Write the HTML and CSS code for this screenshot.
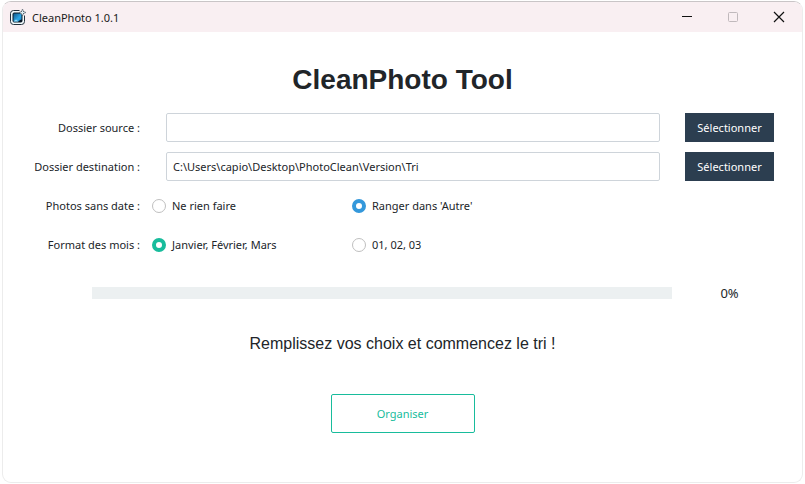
FILE: index.html
```html
<!DOCTYPE html>
<html lang="fr">
<head>
  <meta charset="UTF-8" />
  <meta name="viewport" content="width=device-width, initial-scale=1.0"/>
  <title>CleanPhoto 1.0.1</title>
  <link rel="stylesheet" href="styles.css">
</head>
<body>

  <div class="window">
    <!-- Title bar -->
    <header class="titlebar">
      <svg class="app-icon" width="17" height="17" viewBox="0 0 17 17" aria-hidden="true">
        <defs>
          <linearGradient id="screen" x1="0" y1="0" x2="1" y2="1">
            <stop offset="0" stop-color="#0f4f80"/>
            <stop offset=".6" stop-color="#2ba6e6"/>
            <stop offset="1" stop-color="#1a78b8"/>
          </linearGradient>
        </defs>
        <rect x="1.500" y="1.500" width="14" height="14" rx="3" fill="#f2fafc" stroke="#22303c"/>
        <rect x="4" y="4" width="9" height="9" rx="1" fill="url(#screen)" stroke="#0b1a28"/>
        <path d="M9 13l2-2 2-.5V13z" fill="#061524"/>
        <path d="M4.500 12.500l2.500-2 2.500 2z" fill="#9adcf5"/>
        <path d="M10.500 0h6.500v6.500h-3l-3.500-3z" fill="#f9eff2"/>
        <path d="M13.500 0l1 2.500L17 3.500l-2.500 1-1 2.500-1-2.500-2.500-1 2.500-1z" fill="#dff0f6" stroke="#32404c" stroke-width=".5"/>
        <path d="M12 2l.6.6M15 2l-.6.6M15 5l-.6-.6" stroke="#32404c"/>
      </svg>
      <span class="app-name">CleanPhoto 1.0.1</span>
      <div class="window-controls">
        <button type="button" aria-label="Réduire">
          <svg width="12" height="12" viewBox="0 0 12 12"><path d="M1 5.500h10" stroke="#111"/></svg>
        </button>
        <button type="button" aria-label="Agrandir" disabled>
          <svg width="12" height="12" viewBox="0 0 12 12"><rect x="1.500" y="1.500" width="9" height="9" rx="1" fill="none" stroke="#c0b9bc"/></svg>
        </button>
        <button type="button" aria-label="Fermer">
          <svg width="12" height="12" viewBox="0 0 12 12"><path d="M1 1l10 10M11 1L1 11" stroke="#111" stroke-width="1.200"/></svg>
        </button>
      </div>
    </header>

    <main>
      <h1>CleanPhoto Tool</h1>

      <form>
        <!-- Folders and options -->
        <div class="settings">
          <label for="source">Dossier source :</label>
          <input type="text" id="source" name="source">
          <button type="button" class="browse">Sélectionner</button>

          <label for="destination">Dossier destination :</label>
          <input type="text" id="destination" name="destination" value="C:\Users\capio\Desktop\PhotoClean\Version\Tri">
          <button type="button" class="browse">Sélectionner</button>

          <span id="nodate-label">Photos sans date :</span>
          <div class="options info" role="radiogroup" aria-labelledby="nodate-label">
            <label><input type="radio" name="nodate" value="none">Ne rien faire</label>
            <label><input type="radio" name="nodate" value="other" checked>Ranger dans 'Autre'</label>
          </div>

          <span id="month-label">Format des mois :</span>
          <div class="options" role="radiogroup" aria-labelledby="month-label">
            <label><input type="radio" name="month" value="name" checked>Janvier, Février, Mars</label>
            <label><input type="radio" name="month" value="number">01, 02, 03</label>
          </div>
        </div>

        <!-- Progress -->
        <div class="progress-row">
          <progress id="progress" value="0" max="100" aria-label="Progression"></progress>
          <output for="progress">0%</output>
        </div>

        <p class="status">Remplissez vos choix et commencez le tri !</p>

        <button type="submit" class="organize">Organiser</button>
      </form>
    </main>
  </div>

</body>
</html>
```

FILE: styles.css
```css
* {
  box-sizing: border-box;
}

body {
  margin: 0;
  padding: 1px 2px;
  font-family: "Noto Sans", "Open Sans", sans-serif;
  font-size: 11px;
  color: #212529;
  background: #fff;
}

.window {
  min-height: calc(100vh - 2px);
  border: 1px solid #ececec;
  border-top-color: #c9c5c7;
  border-radius: 9px;
  overflow: hidden;
  background: #fff;
}

.titlebar {
  display: flex;
  align-items: center;
  height: 30px;
  padding-left: 6px;
  background: #f9eff2;
  color: #1a1a1a;
}

.app-name {
  margin-left: 6px;
}

.window-controls {
  display: flex;
  margin-left: auto;
}

.window-controls button {
  display: flex;
  align-items: center;
  justify-content: center;
  width: 46px;
  height: 30px;
  padding: 0;
  border: none;
  background: none;
}

h1 {
  margin: 31px 0 17px;
  font-family: "Liberation Sans", Arial, sans-serif;
  font-size: 28px;
  line-height: 33px;
  text-align: center;
}

input, button {
  font: inherit;
  color: inherit;
}

.settings {
  display: grid;
  grid-template-columns: 137px 1fr auto;
  grid-auto-rows: 29px;
  gap: 10px 12px;
  align-items: center;
  padding-right: 28px;
}

.settings > label,
.settings > span {
  text-align: right;
}

input[type="text"] {
  height: 29px;
  min-width: 0;
  margin: 0 13px 0 14px;
  padding: 0 6px;
  border: 1px solid #ced4da;
  border-radius: 2px;
  background: #fff;
}

.browse {
  width: 89px;
  height: 29px;
  padding: 0;
  border: none;
  background: #2c3e50;
  color: #fff;
}

.options {
  display: grid;
  grid-column: 2 / -1;
  grid-template-columns: 200px 1fr;
}

.options label {
  display: flex;
  align-items: center;
  gap: 6px;
}

input[type="radio"] {
  appearance: none;
  width: 14px;
  height: 14px;
  margin: 0;
  border: 1px solid #bfbfbf;
  border-radius: 50%;
  background: #fff;
}

input[type="radio"]:checked {
  border: 4px solid #18bc9c;
}

.info input[type="radio"]:checked {
  border-color: #3498db;
}

.progress-row {
  display: flex;
  align-items: center;
  height: 20px;
  margin-top: 24px;
  padding: 0 15px 0 89px;
}

progress {
  appearance: none;
  flex: 1;
  height: 12px;
  border: none;
  background: #ecf0f1;
}

progress::-webkit-progress-bar {
  background: #ecf0f1;
}

progress::-webkit-progress-value {
  background: #18bc9c;
}

output {
  width: 115px;
  font-size: 13px;
  text-align: center;
}

.status {
  margin: 31px 0 0;
  font-family: "Liberation Sans", Arial, sans-serif;
  font-size: 16px;
  line-height: 20px;
  text-align: center;
}

.organize {
  display: block;
  width: 144px;
  height: 39px;
  margin: 40px auto 0;
  border: 1px solid #18bc9c;
  border-radius: 2px;
  background: #fff;
  color: #18bc9c;
}
```
